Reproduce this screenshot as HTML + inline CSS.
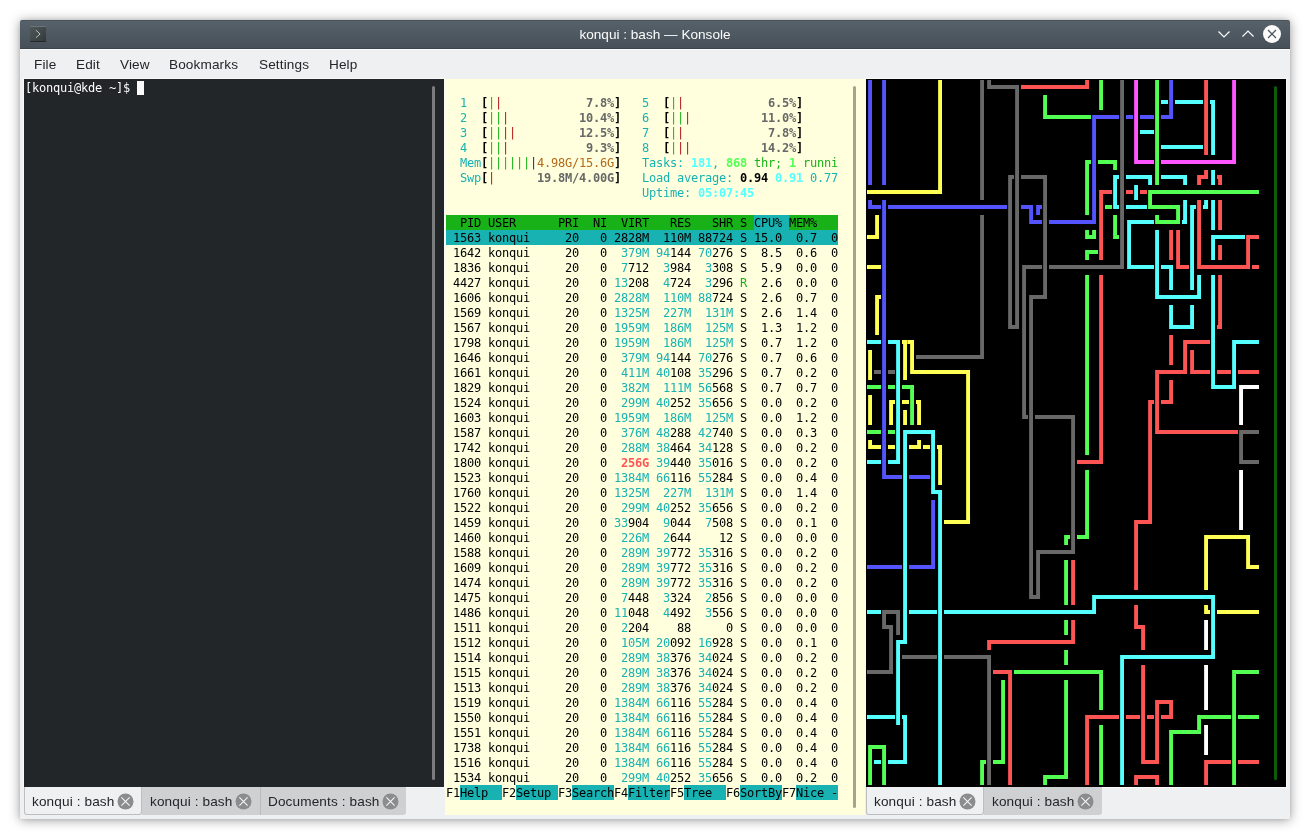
<!DOCTYPE html>
<html lang="en"><head><meta charset="utf-8"><title>konqui : bash — Konsole</title>
<style>
*{box-sizing:border-box}
html,body{margin:0;padding:0}
body{width:1310px;height:839px;background:#fff;overflow:hidden;position:relative;font-family:"Liberation Sans", "DejaVu Sans", sans-serif;font-size:13.6px;color:#232629}
#win{position:absolute;left:20px;top:20px;width:1270px;height:799px;background:#eff0f1;border-radius:2px 2px 0 0;box-shadow:0 1px 12px rgba(0,0,0,.4),0 0 3px rgba(0,0,0,.1)}
#title{position:absolute;left:0;top:0;width:1270px;height:29px;border-radius:2px 2px 0 0;background:linear-gradient(#4a545b 0,#4a545b 1px,#566169 1px,#475058 28px,#3c454c 28px);color:#fcfcfc}
#title .t{position:absolute;left:0;right:0;top:0;height:29px;line-height:30px;text-align:center;font-size:13.6px}
#appicon{position:absolute;left:10px;top:6px;width:16px;height:16px}
.wbtn{position:absolute;top:5px;width:18px;height:18px}
#menu{position:absolute;left:0;top:29px;width:1270px;height:30px;background:#eff0f1;border-top:1px solid #fafafb}
#menu span{position:absolute;top:0;line-height:30px;font-size:13.6px;letter-spacing:.12px;color:#232629}
.pane{position:absolute;top:59px;width:420px}
.fr{box-shadow:0 0 0 1px #f9f9fa}
.term{position:absolute;left:0;top:0;width:420px;overflow:hidden;font-family:"DejaVu Sans Mono", "Liberation Mono", monospace;font-size:12px;line-height:15px;letter-spacing:-0.225px;white-space:pre}
.gs{will-change:transform}
.rows{position:absolute;left:1px;top:2px;will-change:transform}
.bg{position:absolute;height:15px}
.rows div{height:15px}
.sb{position:absolute;width:3px;border-radius:1.5px}
.tabs{position:absolute;left:0;top:708px;width:420px;height:28px}
.tab{position:absolute;top:0;height:28px;line-height:29px;font-size:13.6px;letter-spacing:.12px;color:#232629;background:#cfd0d2;padding-left:8px;white-space:nowrap}
.tab.on svg{margin-left:-1px}
.tab.on{background:#eff0f1;border:1px solid #bcbec0;border-top:none;border-radius:0 0 3px 3px;padding-left:7px}
.tab span{display:inline-block}
.tab svg{position:absolute;top:5.5px;width:17px;height:17px}
b{font-weight:bold}
#pipes{top:1px;width:406px;height:705px;overflow:hidden}
#pp{position:absolute;left:0;top:0}
#pp div{overflow:hidden;width:406px}
#pp i{font-style:normal;display:inline-block;height:15px;line-height:14.2px;overflow:hidden;vertical-align:top;text-indent:-.8px;padding-right:.8px;-webkit-text-stroke:2px}
.b{color:#5454ff}.y{color:#ffff54}.k{color:#686868}.r{color:#ff5454}.g{color:#54ff54}.m{color:#ff54ff}.c{color:#54ffff}.w{color:#fff}
</style></head>
<body>
<div id="win">
<div id="title">
<svg id="appicon" viewBox="0 0 16 16"><defs><linearGradient id="ig" x1="0" y1="0" x2="1" y2="1"><stop offset="0" stop-color="#4f5859"/><stop offset="1" stop-color="#33393b"/></linearGradient></defs><rect x="0" y="0" width="16" height="16" fill="url(#ig)"/><rect x="0" y="0" width="16" height="1" fill="#6c7477"/><rect x="0" y="15" width="16" height="1" fill="#25282a"/><path d="M5.9 4.2 L10.1 8 L5.9 11.8" fill="none" stroke="#bcc0c2" stroke-width="1"/></svg>
<div class="t gs">konqui : bash — Konsole</div>
<svg class="wbtn" style="left:1195px" viewBox="0 0 18 18"><path d="M3.5 6.5 L9 12 L14.5 6.5" fill="none" stroke="#fcfcfc" stroke-width="1.2"/></svg>
<svg class="wbtn" style="left:1219px" viewBox="0 0 18 18"><path d="M3.5 11.5 L9 6 L14.5 11.5" fill="none" stroke="#fcfcfc" stroke-width="1.2"/></svg>
<svg class="wbtn" style="left:1243px" viewBox="0 0 18 18"><circle cx="9" cy="9" r="9" fill="#fcfcfc"/><path d="M5 5 L13 13 M13 5 L5 13" fill="none" stroke="#475057" stroke-width="1.1"/></svg>
</div>
<div id="menu"><div class="gs"><span style="left:14px">File</span><span style="left:56px">Edit</span><span style="left:100px">View</span><span style="left:149px">Bookmarks</span><span style="left:239px">Settings</span><span style="left:309px">Help</span></div></div>
<div class="pane" style="left:4px;height:736px">
<div class="term fr" style="height:708px;background:#232629;color:#fcfcfc"><div class="rows"><div>[konqui@kde ~]$ </div></div><div class="bg" style="left:113px;top:2px;width:7px;height:14px;background:#fcfcfc"></div>
<div class="sb" style="left:408px;top:7px;height:694px;background:#7a7c7d"></div></div>
<div class="tabs"><div class="tab on" style="left:0px;width:118px;"><span class="gs">konqui : bash</span><svg style="left:93px" viewBox="0 0 17 17"><circle cx="8.5" cy="8.5" r="8" fill="#8a8c8e"/><path d="M4.4 4.4 L12.6 12.6 M12.6 4.4 L4.4 12.6" fill="none" stroke="#f4f5f5" stroke-width="1.1"/></svg></div><div class="tab" style="left:118px;width:118px;"><span class="gs">konqui : bash</span><svg style="left:93px" viewBox="0 0 17 17"><circle cx="8.5" cy="8.5" r="8" fill="#8a8c8e"/><path d="M4.4 4.4 L12.6 12.6 M12.6 4.4 L4.4 12.6" fill="none" stroke="#f4f5f5" stroke-width="1.1"/></svg></div><div class="tab" style="left:236px;width:146px;border-left:1px solid #b9bbbd;padding-left:7px;border-radius:0 0 3px 0"><span class="gs">Documents : bash</span><svg style="left:121px" viewBox="0 0 17 17"><circle cx="8.5" cy="8.5" r="8" fill="#8a8c8e"/><path d="M4.4 4.4 L12.6 12.6 M12.6 4.4 L4.4 12.6" fill="none" stroke="#f4f5f5" stroke-width="1.1"/></svg></div></div>
</div>
<div class="pane" style="left:425px;height:736px">
<div class="term" style="height:736px;background:#ffffdd;color:#000"><div class="bg" style="left:1px;top:136px;width:308px;background:#18b218"></div><div class="bg" style="left:309px;top:136px;width:35px;background:#18b2b2"></div><div class="bg" style="left:344px;top:136px;width:49px;background:#18b218"></div><div class="bg" style="left:1px;top:151px;width:392px;background:#18b2b2"></div><div class="bg" style="left:15px;top:706px;width:42px;background:#18b2b2"></div><div class="bg" style="left:71px;top:706px;width:42px;background:#18b2b2"></div><div class="bg" style="left:127px;top:706px;width:42px;background:#18b2b2"></div><div class="bg" style="left:183px;top:706px;width:42px;background:#18b2b2"></div><div class="bg" style="left:239px;top:706px;width:42px;background:#18b2b2"></div><div class="bg" style="left:295px;top:706px;width:42px;background:#18b2b2"></div><div class="bg" style="left:351px;top:706px;width:42px;background:#18b2b2"></div><div class="rows"><div></div><div>  <span style="color:#18b2b2">1  </span><b>[</b><span style="color:#18b218">|</span><span style="color:#b21818">|</span><span style="color:#686868"><b>            7.8%</b></span><b>]</b>   <span style="color:#18b2b2">5  </span><b>[</b><span style="color:#18b218">|</span><span style="color:#b21818">|</span><span style="color:#686868"><b>            6.5%</b></span><b>]</b></div><div>  <span style="color:#18b2b2">2  </span><b>[</b><span style="color:#18b218">||</span><span style="color:#b21818">|</span><span style="color:#686868"><b>          10.4%</b></span><b>]</b>   <span style="color:#18b2b2">6  </span><b>[</b><span style="color:#18b218">||</span><span style="color:#b21818">|</span><span style="color:#686868"><b>          11.0%</b></span><b>]</b></div><div>  <span style="color:#18b2b2">3  </span><b>[</b><span style="color:#18b218">||</span><span style="color:#b21818">||</span><span style="color:#686868"><b>         12.5%</b></span><b>]</b>   <span style="color:#18b2b2">7  </span><b>[</b><span style="color:#18b218">|</span><span style="color:#b21818">|</span><span style="color:#686868"><b>            7.8%</b></span><b>]</b></div><div>  <span style="color:#18b2b2">4  </span><b>[</b><span style="color:#18b218">||</span><span style="color:#b21818">|</span><span style="color:#686868"><b>           9.3%</b></span><b>]</b>   <span style="color:#18b2b2">8  </span><b>[</b><span style="color:#18b218">|</span><span style="color:#b21818">||</span><span style="color:#686868"><b>          14.2%</b></span><b>]</b></div><div>  <span style="color:#18b2b2">Mem</span><b>[</b><span style="color:#18b218">||||||</span><span style="color:#1818b2">|</span><span style="color:#b26818">4.98G/15.6G</span><b>]</b>   <span style="color:#18b2b2">Tasks: </span><span style="color:#54ffff"><b>181</b></span><span style="color:#18b2b2">, </span><span style="color:#54ff54"><b>868</b></span><span style="color:#18b218"> thr; </span><span style="color:#54ff54"><b>1</b></span><span style="color:#18b218"> runni</span></div><div>  <span style="color:#18b2b2">Swp</span><b>[</b><span style="color:#b21818">|</span><span style="color:#686868"><b>      19.8M/4.00G</b></span><b>]</b>   <span style="color:#18b2b2">Load average: </span><b>0.94</b> <span style="color:#54ffff"><b>0.91</b></span> <span style="color:#18b2b2">0.77</span></div><div>                            <span style="color:#18b2b2">Uptime: </span><span style="color:#54ffff"><b>05:07:45</b></span></div><div></div><div>  PID USER      PRI  NI  VIRT   RES   SHR S CPU% MEM%   </div><div> 1563 konqui     20   0 2828M  110M 88724 S 15.0  0.7  0</div><div> 1642 konqui     20   0  <span style="color:#18b2b2">379M</span> <span style="color:#18b2b2">94</span>144 <span style="color:#18b2b2">70</span>276 S  8.5  0.6  0</div><div> 1836 konqui     20   0  <span style="color:#18b2b2">7</span>712  <span style="color:#18b2b2">3</span>984  <span style="color:#18b2b2">3</span>308 S  5.9  0.0  0</div><div> 4427 konqui     20   0 <span style="color:#18b2b2">13</span>208  <span style="color:#18b2b2">4</span>724  <span style="color:#18b2b2">3</span>296 <span style="color:#18b218">R</span>  2.6  0.0  0</div><div> 1606 konqui     20   0 <span style="color:#18b2b2">2828M</span>  <span style="color:#18b2b2">110M</span> <span style="color:#18b2b2">88</span>724 S  2.6  0.7  0</div><div> 1569 konqui     20   0 <span style="color:#18b2b2">1325M</span>  <span style="color:#18b2b2">227M</span>  <span style="color:#18b2b2">131M</span> S  2.6  1.4  0</div><div> 1567 konqui     20   0 <span style="color:#18b2b2">1959M</span>  <span style="color:#18b2b2">186M</span>  <span style="color:#18b2b2">125M</span> S  1.3  1.2  0</div><div> 1798 konqui     20   0 <span style="color:#18b2b2">1959M</span>  <span style="color:#18b2b2">186M</span>  <span style="color:#18b2b2">125M</span> S  0.7  1.2  0</div><div> 1646 konqui     20   0  <span style="color:#18b2b2">379M</span> <span style="color:#18b2b2">94</span>144 <span style="color:#18b2b2">70</span>276 S  0.7  0.6  0</div><div> 1661 konqui     20   0  <span style="color:#18b2b2">411M</span> <span style="color:#18b2b2">40</span>108 <span style="color:#18b2b2">35</span>296 S  0.7  0.2  0</div><div> 1829 konqui     20   0  <span style="color:#18b2b2">382M</span>  <span style="color:#18b2b2">111M</span> <span style="color:#18b2b2">56</span>568 S  0.7  0.7  0</div><div> 1524 konqui     20   0  <span style="color:#18b2b2">299M</span> <span style="color:#18b2b2">40</span>252 <span style="color:#18b2b2">35</span>656 S  0.0  0.2  0</div><div> 1603 konqui     20   0 <span style="color:#18b2b2">1959M</span>  <span style="color:#18b2b2">186M</span>  <span style="color:#18b2b2">125M</span> S  0.0  1.2  0</div><div> 1587 konqui     20   0  <span style="color:#18b2b2">376M</span> <span style="color:#18b2b2">48</span>288 <span style="color:#18b2b2">42</span>740 S  0.0  0.3  0</div><div> 1742 konqui     20   0  <span style="color:#18b2b2">288M</span> <span style="color:#18b2b2">38</span>464 <span style="color:#18b2b2">34</span>128 S  0.0  0.2  0</div><div> 1800 konqui     20   0  <span style="color:#ff5454"><b>256G</b></span> <span style="color:#18b2b2">39</span>440 <span style="color:#18b2b2">35</span>016 S  0.0  0.2  0</div><div> 1523 konqui     20   0 <span style="color:#18b2b2">1384M</span> <span style="color:#18b2b2">66</span>116 <span style="color:#18b2b2">55</span>284 S  0.0  0.4  0</div><div> 1760 konqui     20   0 <span style="color:#18b2b2">1325M</span>  <span style="color:#18b2b2">227M</span>  <span style="color:#18b2b2">131M</span> S  0.0  1.4  0</div><div> 1522 konqui     20   0  <span style="color:#18b2b2">299M</span> <span style="color:#18b2b2">40</span>252 <span style="color:#18b2b2">35</span>656 S  0.0  0.2  0</div><div> 1459 konqui     20   0 <span style="color:#18b2b2">33</span>904  <span style="color:#18b2b2">9</span>044  <span style="color:#18b2b2">7</span>508 S  0.0  0.1  0</div><div> 1460 konqui     20   0  <span style="color:#18b2b2">226M</span>  <span style="color:#18b2b2">2</span>644    12 S  0.0  0.0  0</div><div> 1588 konqui     20   0  <span style="color:#18b2b2">289M</span> <span style="color:#18b2b2">39</span>772 <span style="color:#18b2b2">35</span>316 S  0.0  0.2  0</div><div> 1609 konqui     20   0  <span style="color:#18b2b2">289M</span> <span style="color:#18b2b2">39</span>772 <span style="color:#18b2b2">35</span>316 S  0.0  0.2  0</div><div> 1474 konqui     20   0  <span style="color:#18b2b2">289M</span> <span style="color:#18b2b2">39</span>772 <span style="color:#18b2b2">35</span>316 S  0.0  0.2  0</div><div> 1475 konqui     20   0  <span style="color:#18b2b2">7</span>448  <span style="color:#18b2b2">3</span>324  <span style="color:#18b2b2">2</span>856 S  0.0  0.0  0</div><div> 1486 konqui     20   0 <span style="color:#18b2b2">11</span>048  <span style="color:#18b2b2">4</span>492  <span style="color:#18b2b2">3</span>556 S  0.0  0.0  0</div><div> 1511 konqui     20   0  <span style="color:#18b2b2">2</span>204    88     0 S  0.0  0.0  0</div><div> 1512 konqui     20   0  <span style="color:#18b2b2">105M</span> <span style="color:#18b2b2">20</span>092 <span style="color:#18b2b2">16</span>928 S  0.0  0.1  0</div><div> 1514 konqui     20   0  <span style="color:#18b2b2">289M</span> <span style="color:#18b2b2">38</span>376 <span style="color:#18b2b2">34</span>024 S  0.0  0.2  0</div><div> 1515 konqui     20   0  <span style="color:#18b2b2">289M</span> <span style="color:#18b2b2">38</span>376 <span style="color:#18b2b2">34</span>024 S  0.0  0.2  0</div><div> 1513 konqui     20   0  <span style="color:#18b2b2">289M</span> <span style="color:#18b2b2">38</span>376 <span style="color:#18b2b2">34</span>024 S  0.0  0.2  0</div><div> 1519 konqui     20   0 <span style="color:#18b2b2">1384M</span> <span style="color:#18b2b2">66</span>116 <span style="color:#18b2b2">55</span>284 S  0.0  0.4  0</div><div> 1550 konqui     20   0 <span style="color:#18b2b2">1384M</span> <span style="color:#18b2b2">66</span>116 <span style="color:#18b2b2">55</span>284 S  0.0  0.4  0</div><div> 1551 konqui     20   0 <span style="color:#18b2b2">1384M</span> <span style="color:#18b2b2">66</span>116 <span style="color:#18b2b2">55</span>284 S  0.0  0.4  0</div><div> 1738 konqui     20   0 <span style="color:#18b2b2">1384M</span> <span style="color:#18b2b2">66</span>116 <span style="color:#18b2b2">55</span>284 S  0.0  0.4  0</div><div> 1516 konqui     20   0 <span style="color:#18b2b2">1384M</span> <span style="color:#18b2b2">66</span>116 <span style="color:#18b2b2">55</span>284 S  0.0  0.4  0</div><div> 1534 konqui     20   0  <span style="color:#18b2b2">299M</span> <span style="color:#18b2b2">40</span>252 <span style="color:#18b2b2">35</span>656 S  0.0  0.2  0</div><div>F1Help  F2Setup F3SearchF4FilterF5Tree  F6SortByF7Nice -</div></div>
<div class="sb" style="left:408px;top:7px;height:722px;background:#a4a490"></div></div>
</div>
<div class="pane" style="left:846px;height:736px">
<div class="term fr" style="height:708px;background:#000;color:#18b218"><div class="rows" id="pipes"><div id="pp"><div><i class="b">┃</i> <i class="b">┃</i>       <i class="y">┃</i>     <i class="k">┃</i><i class="k">┗</i><i class="k">━━━</i><i class="k">┓</i><i class="r">━━━━━━━━━</i><i class="r">┛</i> <i class="g">┃</i>  <i class="k">┃</i> <i class="m">┃</i>  <i class="g">┃</i> <i class="b">┃</i>    <i class="r">┃</i>   <i class="m">┃</i></div><div><i class="b">┃</i> <i class="b">┃</i>       <i class="y">┃</i>     <i class="k">┃</i>    <i class="k">┃</i>   <i class="g">┃</i>       <i class="g">┃</i>  <i class="k">┃</i> <i class="m">┃</i>  <i class="g">┃</i><i class="c">━</i><i class="b">┃</i><i class="c">━━━━</i><i class="r">┃</i><i class="c">┓</i>  <i class="m">┃</i></div><div><i class="b">┃</i> <i class="b">┃</i>       <i class="y">┃</i>     <i class="k">┃</i>    <i class="k">┃</i>   <i class="g">┗</i><i class="g">━━━━━━</i><i class="b">┏</i><i class="b">━━━</i><i class="k">┃</i><i class="b">━</i><i class="m">┃</i><i class="b">━━</i><i class="g">┃</i><i class="b">━</i><i class="b">┛</i>    <i class="r">┃</i><i class="c">┃</i>  <i class="m">┃</i></div><div><i class="b">┃</i> <i class="b">┃</i>       <i class="y">┃</i>     <i class="k">┃</i>    <i class="k">┃</i>          <i class="b">┃</i>   <i class="k">┃</i> <i class="m">┃</i><i class="c">━━</i><i class="g">┃</i>      <i class="r">┃</i><i class="c">┃</i>  <i class="m">┃</i></div><div><i class="b">┃</i> <i class="b">┃</i>       <i class="y">┃</i>     <i class="k">┃</i>    <i class="k">┃</i>          <i class="b">┃</i>   <i class="k">┃</i> <i class="m">┃</i>  <i class="g">┃</i><i class="c">━━━━━━</i><i class="r">┃</i><i class="c">┃</i>  <i class="m">┃</i></div><div><i class="b">┃</i> <i class="b">┃</i>       <i class="y">┃</i>     <i class="k">┃</i>    <i class="k">┃</i>         <i class="g">┏</i><i class="b">┃</i><i class="g">━━</i><i class="g">┓</i><i class="k">┃</i> <i class="m">┗</i><i class="m">━━</i><i class="g">┃</i><i class="m">━━━━━━━━━━</i><i class="m">┛</i></div><div><i class="b">┃</i> <i class="b">┃</i>       <i class="y">┃</i>     <i class="k">┃</i>   <i class="k">┏</i><i class="k">┃</i><i class="k">━━━</i><i class="k">┓</i>     <i class="g">┃</i><i class="b">┃</i>  <i class="c">┏</i><i class="k">┃</i><i class="c">━━━</i><i class="c">┓</i><i class="g">┃</i><i class="c">━━━</i><i class="c">┓</i> <i class="r">┏</i><i class="r">┛</i><i class="c">┃</i><i class="r">┓</i></div><div><i class="y">━━━━━━━━━━</i><i class="y">┛</i>     <i class="k">┃</i>   <i class="k">┃┃</i>   <i class="k">┃</i>     <i class="g">┃</i><i class="b">┃</i><i class="r">┏</i><i class="r">━</i><i class="c">┃</i><i class="k">┃</i><i class="r">━</i><i class="c">┃</i><i class="r">━</i><i class="g">┏</i><i class="g">━━━━━━━━━━━━━━━</i></div><div><i class="b">┗</i><i class="b">━</i><i class="b">┃</i><i class="b">━━━━━━━━━━━━━━━━━</i><i class="k">┃┃</i><i class="b">━</i><i class="b">┓</i><i class="b">┏</i><i class="k">┃</i>     <i class="g">┃</i><i class="b">┃</i><i class="r">┃</i><i class="g">━</i><i class="c">┗</i><i class="k">┃</i><i class="c">━━━</i><i class="g">┗</i><i class="g">━━━</i><i class="g">┓</i><i class="c">┃</i><i class="c">┏</i><i class="r">┃</i><i class="c">┛</i><i class="c">┃</i><i class="r">┃</i></div><div> <i class="y">┃</i><i class="b">┃</i>             <i class="k">┃</i>   <i class="k">┃┃</i> <i class="b">┗</i><i class="b">━</i><i class="k">┃</i><i class="b">━━━━━━</i><i class="b">┛</i><i class="r">┃</i> <i class="g">┃</i><i class="k">┃</i><i class="c">┏</i><i class="c">━━━</i><i class="g">┗</i><i class="g">━━</i><i class="g">┛</i><i class="c">┛</i><i class="c">┃</i><i class="r">┃</i> <i class="c">┃</i><i class="r">┃</i></div><div><i class="y">━</i><i class="y">┛</i><i class="b">┃</i>             <i class="k">┃</i>   <i class="k">┃┃</i>   <i class="k">┃</i>     <i class="g">┗</i><i class="g">┛</i><i class="r">┃</i> <i class="g">┗</i><i class="k">┃</i><i class="c">┃</i>   <i class="c">┃</i> <i class="r">┃┃</i> <i class="c">┃</i><i class="r">┃</i> <i class="c">┏</i><i class="c">━━━━</i><i class="r">┏</i><i class="r">━</i></div><div>  <i class="b">┃</i>             <i class="k">┃</i>   <i class="k">┃┃</i>   <i class="k">┃</i>     <i class="g">┏</i><i class="g">━</i><i class="r">┃</i>  <i class="k">┃</i><i class="c">┃</i>   <i class="c">┃</i> <i class="r">┃┃</i> <i class="c">┃</i><i class="r">┃</i> <i class="c">┃</i><i class="r">┃</i>   <i class="r">┃</i></div><div><i class="y">━━</i><i class="b">┃</i>             <i class="k">┃</i>   <i class="k">┃┃</i><i class="k">┏</i><i class="k">━━</i><i class="k">┃</i><i class="k">━━━━━━━━━━</i><i class="k">┛</i><i class="c">┗</i><i class="c">━━━</i><i class="c">┃</i><i class="c">━</i><i class="c">┓</i><i class="r">┗</i><i class="r">━</i><i class="c">┃</i><i class="r">┗</i><i class="r">━━━━━━</i><i class="r">┛</i><i class="r">━</i></div><div>  <i class="b">┃</i>             <i class="k">┃</i>   <i class="k">┃┃┃</i>  <i class="k">┃</i>     <i class="g">┃</i> <i class="r">┃</i>       <i class="c">┃</i> <i class="c">┃</i>  <i class="c">┃┃</i> <i class="c">┃</i><i class="r">┃</i></div><div> <i class="y">┏</i><i class="b">┃</i>             <i class="k">┃</i>   <i class="k">┃┃┃</i><i class="k">┏</i><i class="k">━</i><i class="k">┛</i>     <i class="g">┃</i> <i class="r">┃</i>       <i class="c">┗</i><i class="c">━━━━━</i><i class="c">┛</i> <i class="c">┃</i><i class="r">┃</i></div><div> <i class="y">┃</i><i class="b">┃</i>             <i class="k">┃</i>   <i class="k">┃┃┃┃</i>       <i class="g">┃</i> <i class="r">┃</i>         <i class="c">┃</i>  <i class="c">┃</i>  <i class="c">┃</i><i class="r">┃</i></div><div> <i class="y">┃</i><i class="b">┃</i>             <i class="k">┃</i>   <i class="k">┗</i><i class="k">┛</i><i class="k">┃┃</i>       <i class="g">┃</i> <i class="r">┃</i>         <i class="c">┗</i><i class="c">━━</i><i class="c">┛</i>  <i class="c">┃</i><i class="r">┛</i></div><div><i class="c">━━</i><i class="b">┃</i><i class="c">━</i><i class="c">┓</i><i class="y">┓┓</i>         <i class="k">┃</i>     <i class="k">┃┃</i>       <i class="g">┃</i> <i class="r">┃</i>         <i class="r">┃</i> <i class="r">┏</i><i class="r">━━━</i><i class="c">┃</i>  <i class="c">┏</i><i class="c">━━━</i></div><div><i class="y">┃</i> <i class="b">┃</i> <i class="c">┃</i><i class="y">┃┃</i><i class="k">━━━━━━━━━</i><i class="k">┛</i>     <i class="k">┃┃</i>       <i class="g">┃</i> <i class="r">┃</i>         <i class="r">┃</i> <i class="r">┃┃</i>  <i class="c">┃</i>  <i class="c">┃</i></div><div><i class="y">┃</i><i class="k">━</i><i class="b">┃</i><i class="k">━</i><i class="c">┃</i><i class="y">┃</i><i class="y">┗</i><i class="y">━━━━━━━</i><i class="y">┓</i>       <i class="k">┃┃</i>       <i class="g">┃</i> <i class="r">┃</i>       <i class="r">┏</i><i class="r">━━━</i><i class="r">┛</i><i class="r">┗</i><i class="r">━━</i><i class="c">┃</i><i class="r">━━</i><i class="c">┃</i><i class="r">━━━</i></div><div><i class="g">━━</i><i class="b">┃</i><i class="g">━</i><i class="c">┃</i><i class="g">━</i><i class="g">┓</i>       <i class="y">┃</i>       <i class="k">┃┃</i>       <i class="g">┃</i> <i class="r">┃</i>       <i class="r">┃</i> <i class="r">┃</i>     <i class="c">┗</i><i class="c">━━</i><i class="c">┛</i><i class="w">┏</i><i class="w">━━</i></div><div><i class="y">┃</i> <i class="b">┃</i><i class="y">┏</i><i class="c">┃</i><i class="y">━</i><i class="g">┃</i><i class="y">┓</i>      <i class="y">┃</i>       <i class="k">┃┃</i>       <i class="g">┃</i> <i class="r">┃</i>      <i class="r">┏</i><i class="r">┃</i><i class="r">━</i><i class="r">┛</i>         <i class="w">┃</i></div><div><i class="y">┃</i> <i class="b">┃</i><i class="y">┃</i><i class="c">┃</i><i class="y">┃</i><i class="g">┃</i><i class="y">┃</i>      <i class="y">┃</i>       <i class="k">┗</i><i class="k">┃</i><i class="k">━━━━━</i><i class="k">┓</i> <i class="g">┃</i> <i class="r">┃</i>      <i class="r">┃┃</i>           <i class="w">┃</i></div><div><i class="g">━━</i><i class="b">┃</i><i class="g">━</i><i class="c">┃</i><i class="c">┏</i><i class="c">━━━</i><i class="c">┓</i>    <i class="y">┃</i>        <i class="k">┃</i>     <i class="k">┃</i> <i class="g">┃</i> <i class="r">┃</i>      <i class="r">┃</i><i class="r">┗</i><i class="r">━━━━━━━━━━━</i><i class="k">┏</i><i class="k">━━</i></div><div><i class="y">┗</i><i class="y">━</i><i class="b">┃</i><i class="y">━</i><i class="c">┃┃</i><i class="y">━</i><i class="y">┛</i><i class="y">━</i><i class="c">┃</i><i class="y">┓</i>   <i class="y">┃</i>        <i class="k">┃</i>     <i class="k">┃</i> <i class="g">┃</i> <i class="r">┃</i>      <i class="r">┃</i>            <i class="k">┃</i></div><div><i class="c">━━</i><i class="b">┃</i><i class="c">━</i><i class="c">┛</i><i class="c">┃</i>   <i class="c">┃</i><i class="y">┃</i>   <i class="y">┃</i>        <i class="k">┃</i>     <i class="k">┃</i><i class="r">━━━</i><i class="r">┛</i>      <i class="r">┃</i>            <i class="k">┗</i><i class="k">━━</i></div><div>  <i class="b">┗</i><i class="b">━━</i><i class="c">┃</i><i class="b">━━━</i><i class="c">┃</i><i class="y">┃</i>   <i class="y">┃</i>        <i class="k">┃</i>     <i class="k">┃</i> <i class="g">┃</i>        <i class="r">┃</i>            <i class="w">┃</i></div><div>     <i class="c">┃</i>   <i class="c">┗</i><i class="c">┓</i>   <i class="y">┃</i>        <i class="k">┃</i>     <i class="k">┃</i> <i class="g">┃</i>        <i class="r">┃</i>            <i class="w">┃</i></div><div>     <i class="c">┃</i>   <i class="b">┃</i><i class="c">┃</i>   <i class="y">┃</i>        <i class="k">┃</i>     <i class="k">┃</i> <i class="g">┃</i>        <i class="r">┃</i>            <i class="w">┃</i></div><div>     <i class="c">┃</i>   <i class="b">┃</i><i class="c">┃</i><i class="y">━━━</i><i class="y">┛</i>        <i class="k">┃</i>     <i class="k">┃</i> <i class="g">┃</i>      <i class="r">┏</i><i class="r">━</i><i class="r">┛</i>            <i class="w">┃</i></div><div>     <i class="c">┃</i>   <i class="b">┃</i><i class="c">┃</i>            <i class="k">┃</i>    <i class="g">┏</i><i class="k">┃</i><i class="g">━</i><i class="g">┛</i>      <i class="r">┃</i>         <i class="y">┏</i><i class="y">━━━━━</i><i class="y">┓</i></div><div>     <i class="c">┃</i>   <i class="b">┃</i><i class="c">┃</i>            <i class="k">┃</i><i class="k">┏</i><i class="k">━━━━</i><i class="k">┛</i>        <i class="r">┃</i>         <i class="y">┃</i>     <i class="y">┃</i></div><div><i class="b">━━━━━</i><i class="c">┃</i><i class="b">━━━</i><i class="b">┛</i><i class="c">┃</i>            <i class="k">┃┃</i>   <i class="g">┃</i><i class="r">┃</i>        <i class="r">┃</i>         <i class="y">┃</i>     <i class="y">┗</i><i class="y">━</i></div><div>     <i class="c">┃</i>    <i class="c">┃</i>            <i class="k">┃┃</i>   <i class="g">┃</i><i class="r">┃</i>        <i class="r">┃</i>         <i class="y">┃</i></div><div>     <i class="c">┃</i>    <i class="c">┃</i>            <i class="k">┗</i><i class="k">┛</i>   <i class="g">┃</i><i class="r">┃</i>  <i class="c">┏</i><i class="c">━━━━━━━━━━━━━━━━</i><i class="c">┓</i></div><div><i class="c">━━</i><i class="k">┏</i><i class="k">━</i><i class="k">┓</i><i class="c">┃</i><i class="c">━━━━</i><i class="c">┃</i><i class="c">━━━━━━━━━━━━━━━━━━━━━</i><i class="c">┛</i>     <i class="r">┃</i>         <i class="y">┗</i><i class="c">┃</i><i class="y">━━━━━━</i></div><div>  <i class="k">┗</i><i class="k">┓</i><i class="k">┃</i><i class="c">┃</i>    <i class="c">┃</i>                 <i class="g">┃</i><i class="r">┃</i>        <i class="r">┗</i><i class="r">┓</i>        <i class="w">┃</i><i class="c">┃</i></div><div>   <i class="k">┃</i><i class="c">┏</i><i class="c">┛</i>    <i class="c">┃</i>      <i class="r">┏</i><i class="r">━━━━━━━━━━━</i><i class="r">┛</i>         <i class="r">┃</i>        <i class="w">┃</i><i class="c">┃</i></div><div>   <i class="k">┃</i><i class="c">┃</i><i class="k">━━━━━</i><i class="c">┃</i><i class="k">━━━━━━</i><i class="k">┓</i>          <i class="g">┃</i>       <i class="c">┏</i><i class="c">━━━━━━━━━━━━</i><i class="c">┛</i></div><div><i class="k">━━━</i><i class="k">┛</i><i class="c">┃</i>     <i class="c">┃</i>      <i class="k">┃</i><i class="r">━━</i><i class="r">┓</i><i class="g">━━━━━━━━━━━━</i><i class="g">┓</i>  <i class="c">┃</i>  <i class="r">┃</i>        <i class="w">┃</i>   <i class="g">┏</i><i class="g">━━━</i></div><div>    <i class="c">┃</i>     <i class="c">┃</i>      <i class="k">┃</i> <i class="g">┃</i><i class="r">┃</i>       <i class="g">┃</i>    <i class="g">┃</i>  <i class="c">┃</i>  <i class="r">┃</i>        <i class="w">┃</i>   <i class="g">┃</i></div><div>    <i class="c">┃</i>     <i class="c">┃</i>      <i class="k">┃</i> <i class="g">┃</i><i class="r">┃</i>       <i class="g">┃</i>    <i class="g">┃</i>  <i class="c">┃</i>  <i class="r">┃</i> <i class="r">┏</i><i class="r">━</i><i class="r">┓</i>    <i class="w">┃</i>   <i class="g">┃</i></div><div><i class="c">━━━━</i><i class="c">┃</i><i class="c">┓</i>    <i class="c">┃</i>      <i class="k">┃</i> <i class="g">┃</i><i class="r">┃</i>       <i class="g">┃</i>  <i class="r">┏</i><i class="r">━━━━</i><i class="c">┃</i><i class="r">━━</i><i class="r">┃</i><i class="r">━</i><i class="r">┃</i><i class="r">━</i><i class="r">┛</i>   <i class="g">┏</i><i class="g">━━━━</i><i class="g">┃</i><i class="g">━━━</i></div><div>     <i class="c">┃</i>    <i class="c">┃</i>      <i class="k">┃</i> <i class="g">┃</i><i class="r">┃</i>       <i class="g">┃</i>  <i class="r">┃</i> <i class="g">┃</i>  <i class="c">┃</i>  <i class="r">┃</i> <i class="r">┃</i> <i class="g">┏</i><i class="g">━━━</i><i class="g">┛</i><i class="w">┃</i>   <i class="g">┃</i></div><div><i class="g">┏</i><i class="g">━</i><i class="g">┓</i>  <i class="c">┃</i>    <i class="c">┃</i>      <i class="k">┃</i> <i class="g">┃</i><i class="r">┃</i>       <i class="g">┃</i>  <i class="r">┃</i> <i class="g">┃</i>  <i class="c">┃</i>  <i class="r">┃</i> <i class="r">┃</i> <i class="g">┃</i>    <i class="w">┃</i>   <i class="g">┃</i></div><div><i class="g">┃</i><i class="c">━</i><i class="g">┃</i><i class="c">━━</i><i class="c">┛</i>    <i class="c">┃</i>     <i class="g">┏</i><i class="k">┃</i><i class="g">━</i><i class="g">┛</i><i class="r">┃</i>       <i class="g">┃</i>  <i class="r">┃</i> <i class="g">┃</i>  <i class="c">┃</i>  <i class="r">┗</i><i class="r">━</i><i class="r">┛</i> <i class="g">┃</i>    <i class="r">┏</i><i class="r">━━━</i><i class="g">┃</i><i class="r">━━━</i></div><div><i class="g">┃</i> <i class="g">┃</i>       <i class="c">┃</i>     <i class="g">┃</i><i class="k">┃</i>  <i class="r">┃</i>    <i class="g">┏</i><i class="g">━━</i><i class="g">┛</i>  <i class="r">┃</i> <i class="g">┃</i>  <i class="c">┃</i> <i class="r">┏</i><i class="r">━━</i><i class="r">┓</i> <i class="g">┃</i>    <i class="r">┃</i>   <i class="g">┃</i></div></div></div>
<div class="sb" style="left:408px;top:7px;height:694px;background:#0b5c0b"></div></div>
<div class="tabs"><div class="tab on" style="left:0px;width:118px;"><span class="gs">konqui : bash</span><svg style="left:93px" viewBox="0 0 17 17"><circle cx="8.5" cy="8.5" r="8" fill="#8a8c8e"/><path d="M4.4 4.4 L12.6 12.6 M12.6 4.4 L4.4 12.6" fill="none" stroke="#f4f5f5" stroke-width="1.1"/></svg></div><div class="tab" style="left:118px;width:118px;border-radius:0 0 3px 0"><span class="gs">konqui : bash</span><svg style="left:93px" viewBox="0 0 17 17"><circle cx="8.5" cy="8.5" r="8" fill="#8a8c8e"/><path d="M4.4 4.4 L12.6 12.6 M12.6 4.4 L4.4 12.6" fill="none" stroke="#f4f5f5" stroke-width="1.1"/></svg></div></div>
</div>
</div>
</body></html>
